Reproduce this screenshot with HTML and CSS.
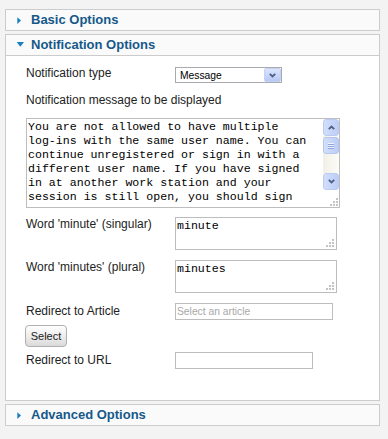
FILE: index.html
```html
<!DOCTYPE html>
<html>
<head>
	<meta charset="UTF-8">
	<title>Notification Options</title>
	<link rel="stylesheet" href="styles.css">
</head>
<body>
	<div class="sliders">
		<div class="panel">
			<h3 class="toggler">
				<svg class="arrow" width="8" height="8" viewBox="0 0 8 8"><polygon points="1.3,1.3 5,4.6 1.3,8" fill="#1a7fbf"/></svg>
				<span>Basic Options</span>
			</h3>
		</div>

		<div class="panel open">
			<h3 class="toggler">
				<svg class="arrow" width="8" height="8" viewBox="0 0 8 8"><polygon points="0.7,1 8,1 4.3,5.7" fill="#1a7fbf"/></svg>
				<span>Notification Options</span>
			</h3>
			<div class="pane">
				<div class="row row-type">
					<label class="key">Notification type</label>
					<div class="selectbox">
						<select><option>Message</option></select>
						<span class="dropbtn"><svg width="7" height="5" viewBox="0 0 7 5"><polyline points="0.8,0.8 3.5,3.5 6.2,0.8" fill="none" stroke="#4d6185" stroke-width="1.8"/></svg></span>
					</div>
				</div>

				<div class="key key-block">Notification message to be displayed</div>
				<div class="msgbox">
					<textarea class="msg" spellcheck="false">You are not allowed to have multiple
log-ins with the same user name. You can
continue unregistered or sign in with a
different user name. If you have signed
in at another work station and your
session is still open, you should sign</textarea>
					<div class="vscroll">
						<div class="sb-btn"><svg width="7" height="5" viewBox="0 0 7 5"><polyline points="0.8,4.2 3.5,1.5 6.2,4.2" fill="none" stroke="#4d6185" stroke-width="1.8"/></svg></div>
						<div class="sb-track">
							<div class="sb-thumb"><i></i><i></i><i></i></div>
						</div>
						<div class="sb-btn"><svg width="7" height="5" viewBox="0 0 7 5"><polyline points="0.8,0.8 3.5,3.5 6.2,0.8" fill="none" stroke="#4d6185" stroke-width="1.8"/></svg></div>
						<div class="sb-corner">
							<svg class="grip" width="10" height="10" viewBox="0 0 10 10" fill="#c4c4c4"><rect x="8" y="2" width="2" height="2"/><rect x="5" y="5" width="2" height="2"/><rect x="8" y="5" width="2" height="2"/><rect x="2" y="8" width="2" height="2"/><rect x="5" y="8" width="2" height="2"/><rect x="8" y="8" width="2" height="2"/></svg>
						</div>
					</div>
				</div>

				<div class="row row-word">
					<label class="key">Word 'minute' (singular)</label>
					<div class="areabox">
						<textarea class="word" spellcheck="false">minute</textarea>
						<svg class="grip" width="10" height="10" viewBox="0 0 10 10" fill="#c4c4c4"><rect x="8" y="2" width="2" height="2"/><rect x="5" y="5" width="2" height="2"/><rect x="8" y="5" width="2" height="2"/><rect x="2" y="8" width="2" height="2"/><rect x="5" y="8" width="2" height="2"/><rect x="8" y="8" width="2" height="2"/></svg>
					</div>
				</div>

				<div class="row row-words">
					<label class="key">Word 'minutes' (plural)</label>
					<div class="areabox">
						<textarea class="word" spellcheck="false">minutes</textarea>
						<svg class="grip" width="10" height="10" viewBox="0 0 10 10" fill="#c4c4c4"><rect x="8" y="2" width="2" height="2"/><rect x="5" y="5" width="2" height="2"/><rect x="8" y="5" width="2" height="2"/><rect x="2" y="8" width="2" height="2"/><rect x="5" y="8" width="2" height="2"/><rect x="8" y="8" width="2" height="2"/></svg>
					</div>
				</div>

				<div class="row row-article">
					<label class="key">Redirect to Article</label>
					<input type="text" class="text article" placeholder="Select an article">
				</div>

				<button type="button" class="btn">Select</button>

				<div class="row row-url">
					<label class="key">Redirect to URL</label>
					<input type="text" class="text url">
				</div>
			</div>
		</div>

		<div class="panel">
			<h3 class="toggler">
				<svg class="arrow" width="8" height="8" viewBox="0 0 8 8"><polygon points="1.3,1.3 5,4.6 1.3,8" fill="#1a7fbf"/></svg>
				<span>Advanced Options</span>
			</h3>
		</div>
	</div>
</body>
</html>
```

FILE: styles.css
```css
*{
	box-sizing:border-box;
}

body{
	margin:0;
	background:#f3f3f3;
	font-family:"Liberation Sans",Arial,sans-serif;
	font-size:12px;
	color:#222;
}

.sliders{
	padding:9px 0 0 5px;
	width:380px;
}

.panel{
	border:1px solid #ccc;
	margin-bottom:3px;
	background:#fff;
}

.toggler{
	margin:0;
	height:20px;
	display:flex;
	align-items:center;
	background:#fafafa;
	font-size:13px;
	font-weight:bold;
	line-height:20px;
	color:#15598a;
}

.open .toggler{
	height:21px;
	border-bottom:1px solid #ccc;
}

.arrow{
	display:block;
	margin-left:10px;
	margin-right:7px;
}

.pane{
	padding:10px 0 31px 20px;
}

.row{
	display:flex;
	align-items:flex-start;
}

.key{
	display:block;
	width:149px;
	flex:none;
	line-height:14px;
}

.key-block{
	width:auto;
	margin-top:10px;
}

/* select */
.selectbox{
	display:flex;
	width:107px;
	height:16px;
	margin-top:1px;
	border:1px solid #a7abb0;
	background:#fff;
}

.selectbox select{
	flex:1;
	min-width:0;
	appearance:none;
	-webkit-appearance:none;
	border:0;
	margin:0;
	padding:0 0 0 4px;
	background:transparent;
	font-family:"Liberation Sans",Arial,sans-serif;
	font-size:10.3px;
	color:#000;
	outline:none;
}

.dropbtn{
	width:17px;
	height:14px;
	display:flex;
	align-items:center;
	justify-content:center;
	background:linear-gradient(#dbe4fd,#b7c8f4);
	border:1px solid #c3d1f3;
	border-radius:2px;
}

/* message textarea */
.msgbox{
	display:flex;
	width:314px;
	height:90px;
	margin-top:11px;
	border:1px solid #bdbdbd;
	background:#fff;
}

.msg{
	flex:1;
	min-width:0;
	border:0;
	margin:0;
	padding:1px 0 0 1px;
	resize:none;
	overflow:hidden;
	outline:none;
	font-family:"Liberation Mono","Courier New",monospace;
	font-size:11.6px;
	line-height:14px;
	color:#000;
	white-space:pre;
}

.vscroll{
	width:16px;
	display:flex;
	flex-direction:column;
}

.sb-btn{
	height:17px;
	display:flex;
	align-items:center;
	justify-content:center;
	background:linear-gradient(to right,#d3defc,#bccdf6);
	border:1px solid #bccbf1;
	border-radius:3px;
}

.sb-track{
	height:37px;
	padding-top:1px;
	background:linear-gradient(to right,#f1efe6,#fcfcf9);
}

.sb-thumb{
	height:17px;
	display:flex;
	flex-direction:column;
	align-items:center;
	justify-content:center;
	gap:1px;
	background:linear-gradient(to right,#d3defc,#bccdf6);
	border:1px solid #b5c6f0;
	border-radius:3px;
}

.sb-thumb i{
	display:block;
	width:6px;
	height:1px;
	background:#eef3fe;
	box-shadow:0 1px 0 #8ca3dc;
}

.sb-corner{
	height:17px;
	display:flex;
	align-items:flex-end;
	justify-content:flex-end;
	padding:0 1px 1px 0;
}

.grip{
	display:block;
}

/* word textareas */
.row-word{
	margin-top:9px;
}

.row-words{
	margin-top:10px;
}

.areabox{
	position:relative;
	width:162px;
	height:33px;
}

.word{
	display:block;
	width:162px;
	height:33px;
	margin:0;
	border:1px solid #bdbdbd;
	padding:1px;
	resize:none;
	overflow:hidden;
	outline:none;
	font-family:"Liberation Mono","Courier New",monospace;
	font-size:11.6px;
	line-height:14px;
	color:#000;
}

.areabox .grip{
	position:absolute;
	right:3px;
	bottom:3px;
}

/* text inputs */
.row-article{
	margin-top:10px;
}

.row-article .key,
.row-url .key{
	padding-top:1px;
}

.text{
	height:17px;
	margin:0;
	border:1px solid #bdbdbd;
	padding:0 0 0 1px;
	background:#fff;
	outline:none;
	font-family:"Liberation Sans",Arial,sans-serif;
	font-size:10.3px;
}

.text::placeholder{
	color:#a8a8a8;
}

.article{
	width:158px;
}

.url{
	width:138px;
}

.btn{
	display:block;
	width:42px;
	height:22px;
	margin:5px 0 0 -1px;
	padding:0;
	border:1px solid #b0b0b0;
	border-radius:4px;
	background:linear-gradient(#ffffff,#e6e6e6 70%,#dadada);
	font-family:"Liberation Sans",Arial,sans-serif;
	font-size:11px;
	color:#222;
}

.row-url{
	margin-top:5px;
}
```
